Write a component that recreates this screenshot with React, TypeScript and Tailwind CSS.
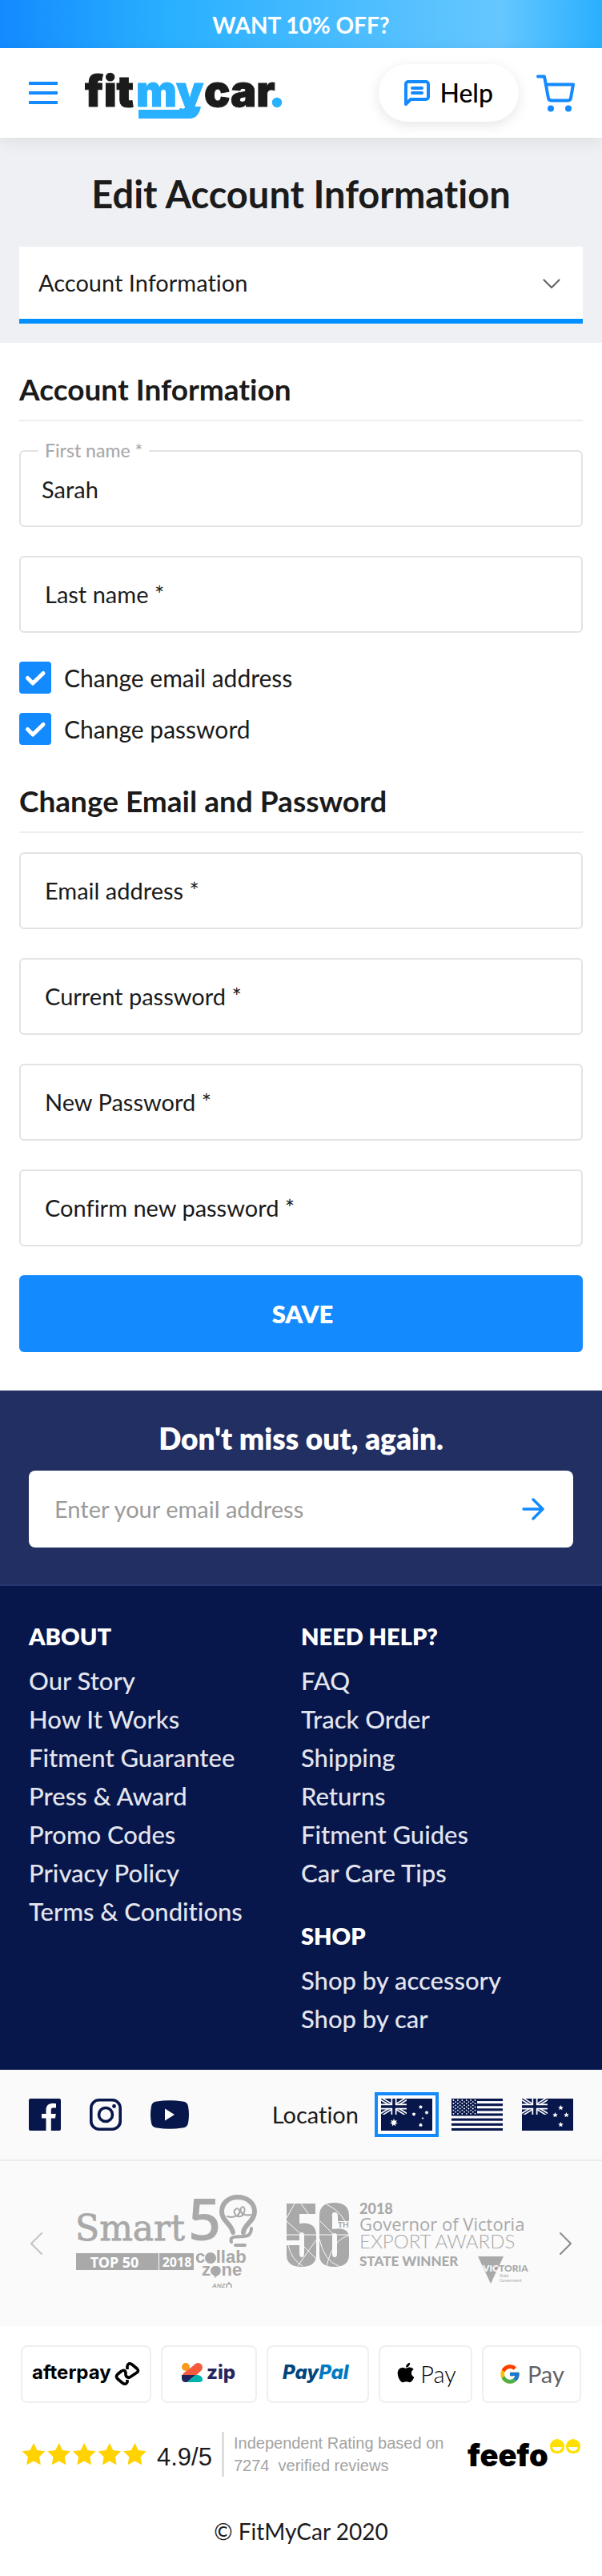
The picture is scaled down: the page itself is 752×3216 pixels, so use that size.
import { useState } from "react";
import type { ReactNode } from "react";
import { FaApple } from "react-icons/fa";
import { FcGoogle } from "react-icons/fc";

const LATO = "Lato, sans-serif";
const INTER = "Inter, sans-serif";
const SANS = '"Liberation Sans", sans-serif';

function MenuIcon() {
  return (
    <svg viewBox="0 0 36 28" className="h-7 w-9" fill="#148aff" aria-hidden="true">
      <path d="M0 0h36v4H0zM0 12h36v4H0zM0 24h36v4H0z" />
    </svg>
  );
}

function Logo() {
  return (
    <svg viewBox="0 0 248 64" className="h-16 w-62 overflow-visible" role="img" aria-label="fitmycar">
      <g fontFamily={INTER} fontWeight="900" fontSize="54" fill="#1b1b1b" stroke="#1b1b1b" strokeWidth="1">
        <text x="2" y="49">fit</text>
        <text x="66" y="49" fill="#29b0ff" stroke="#29b0ff">my</text>
        <text x="151" y="49">car</text>
      </g>
      <path d="M69 53h61q4 0 4-4h13q-3 15-14 15H69z" fill="#29b0ff" />
      <circle cx="242" cy="44" r="6.2" fill="#29b0ff" />
    </svg>
  );
}

function ChatIcon() {
  return (
    <svg viewBox="0 0 32 32" className="size-8" fill="none" stroke="#148aff" strokeWidth="4" strokeLinecap="round" strokeLinejoin="round" aria-hidden="true">
      <path d="M2 30V5a3 3 0 0 1 3-3h22a3 3 0 0 1 3 3v16a3 3 0 0 1-3 3H8z" />
      <path d="M10 10h12M10 16h12" />
    </svg>
  );
}

function CartIcon() {
  return (
    <svg viewBox="0 0 48 47" className="h-12 w-12" fill="none" stroke="#148aff" strokeWidth="4" strokeLinecap="round" strokeLinejoin="round" aria-hidden="true">
      <path d="M2 3h8l5 27q.7 3 4 3h20q3.500 0 4-3l3-17H13" />
      <circle cx="18" cy="43" r="4" fill="#148aff" stroke="none" />
      <circle cx="40" cy="43" r="4" fill="#148aff" stroke="none" />
    </svg>
  );
}

function Field({ id, label, type = "text", initial = "" }: { id: string; label: string; type?: string; initial?: string }) {
  const [value, setValue] = useState(initial);
  return (
    <div className="relative">
      <input
        id={id}
        type={type}
        value={value}
        onChange={(e) => setValue(e.target.value)}
        className="block h-24 w-full rounded-md border-2 border-[#e3e3e3] bg-transparent px-[26px] text-[29px] text-[#1b1b1b] outline-none"
      />
      <label
        htmlFor={id}
        className={
          value
            ? "pointer-events-none absolute -top-3 left-6 bg-white px-2 text-[23px] leading-6 font-medium text-[#a9a9a9]"
            : "pointer-events-none absolute inset-y-0 left-8 flex items-center text-[29px] text-[#1b1b1b]"
        }
      >
        {label} *
      </label>
    </div>
  );
}

function Check({ id, children }: { id: string; children: ReactNode }) {
  return (
    <div className="flex items-center gap-4">
      <span className="grid size-10">
        <input id={id} type="checkbox" defaultChecked className="peer col-start-1 row-start-1 size-10 appearance-none rounded border-2 border-[#148aff] checked:bg-[#148aff]" />
        <svg viewBox="0 0 40 40" className="pointer-events-none invisible col-start-1 row-start-1 size-10 peer-checked:visible" fill="none" stroke="#fff" strokeWidth="5" strokeLinecap="round" strokeLinejoin="round" aria-hidden="true">
          <path d="M10.500 20.500l6.500 6.500L30 14.500" />
        </svg>
      </span>
      <label htmlFor={id} className="text-[30px] leading-10">{children}</label>
    </div>
  );
}

function SectionTitle({ children }: { children: ReactNode }) {
  return <h2 className="border-b-2 border-[#eeeeee] pb-4 text-[37px] leading-[44px] font-bold">{children}</h2>;
}

function LinkList({ title, items }: { title: string; items: string[] }) {
  return (
    <div>
      <h3 className="pb-2 text-[29px] leading-[46px] font-extrabold text-white">{title}</h3>
      <ul>
        {items.map((item) => (
          <li key={item}>
            <a href="#" className="block text-[31px] leading-[48px] font-medium text-[#e3e5ee]">{item}</a>
          </li>
        ))}
      </ul>
    </div>
  );
}

function UnionJack() {
  return (
    <g>
      <path d="M0 0l32 20M32 0L0 20" stroke="#fff" strokeWidth="4.500" />
      <path d="M0 0l32 20M32 0L0 20" stroke="#07164b" strokeWidth="1.300" />
      <path d="M16 0v20M0 10h32" stroke="#fff" strokeWidth="7" />
      <path d="M16 0v20M0 10h32" stroke="#07164b" strokeWidth="3.600" />
    </g>
  );
}

function starPoints(cx: number, cy: number, r: number, n: number, inner: number) {
  return Array.from({ length: n * 2 }, (_, i) => {
    const a = (Math.PI * i) / n - Math.PI / 2;
    const q = i % 2 ? r * inner : r;
    return `${(cx + q * Math.cos(a)).toFixed(2)},${(cy + q * Math.sin(a)).toFixed(2)}`;
  }).join(" ");
}

function FlagAu() {
  return (
    <svg viewBox="0 0 64 40" className="h-10 w-16" role="img" aria-label="Australia">
      <path fill="#07164b" d="M0 0h64v40H0z" />
      <svg width="32" height="20" viewBox="0 0 32 20"><UnionJack /></svg>
      <g fill="#fff">
        <polygon points={starPoints(16, 30, 5, 7, 0.5)} />
        {[[49.5, 10.5], [41, 19.5], [57, 17.5], [49.5, 33]].map(([x, y]) => (
          <polygon key={`${x}-${y}`} points={starPoints(x, y, 2.6, 7, 0.6)} />
        ))}
        <polygon points={starPoints(52, 24.5, 1.6, 5, 0.5)} />
      </g>
    </svg>
  );
}

function FlagUs() {
  const dots: [number, number][] = [];
  for (let r = 0; r < 9; r++) {
    for (let c = 0; c < (r % 2 ? 5 : 6); c++) dots.push([2.5 + c * 5.4 + (r % 2 ? 2.7 : 0), 2 + r * 2.1]);
  }
  return (
    <svg viewBox="0 0 64 40" className="h-10 w-16" role="img" aria-label="United States">
      <path fill="#fff" d="M0 0h64v40H0z" />
      {[0, 1, 2, 3, 4, 5, 6].map((i) => (
        <rect key={i} y={(i * 80) / 13} width="64" height={40 / 13} fill="#07164b" />
      ))}
      <path fill="#07164b" d="M0 0h32v20H0z" />
      {dots.map(([x, y]) => (
        <circle key={`${x}-${y}`} cx={x} cy={y} r="0.9" fill="#fff" />
      ))}
    </svg>
  );
}

function FlagNz() {
  return (
    <svg viewBox="0 0 64 40" className="h-10 w-16" role="img" aria-label="New Zealand">
      <path fill="#07164b" d="M0 0h64v40H0z" />
      <svg width="32" height="20" viewBox="0 0 32 20"><UnionJack /></svg>
      <g fill="#fff">
        {[[48.5, 11.5], [41.5, 20.5], [55.5, 20.5], [48.5, 32.5]].map(([x, y]) => (
          <polygon key={`${x}-${y}`} points={starPoints(x, y, 3.5, 5, 0.45)} />
        ))}
      </g>
    </svg>
  );
}

function FacebookIcon() {
  return (
    <svg viewBox="0 0 40 40" className="size-10" aria-hidden="true">
      <rect width="40" height="40" rx="2" fill="#07164b" />
      <path d="M21.500 40V24.500H16V19h5.500v-4.800C21.500 8.900 24.700 6 29.400 6c2 0 3.900.2 4.600.3v5.200h-3.200c-2.500 0-3 1.200-3 3V19h6l-.8 5.500h-5.200V40z" fill="#fff" />
    </svg>
  );
}

function InstagramIcon() {
  return (
    <svg viewBox="0 0 40 40" className="size-10" fill="none" stroke="#07164b" strokeWidth="3.600" aria-hidden="true">
      <rect x="1.800" y="1.800" width="36.400" height="36.400" rx="10" />
      <circle cx="20" cy="20" r="8.500" />
      <circle cx="30.500" cy="9.500" r="2.400" fill="#07164b" stroke="none" />
    </svg>
  );
}

function YoutubeIcon() {
  return (
    <svg viewBox="0 0 48 36" className="h-9 w-12" aria-hidden="true">
      <path d="M8 1.500Q24-1 40 1.500q6 .5 7 6 2 10.500 0 21-1 5.500-7 6-16 2.500-32 0-6-.5-7-6-2-10.500 0-21 1-5.500 7-6z" fill="#07164b" />
      <path d="M18 10.500v15L30 18z" fill="#fff" />
    </svg>
  );
}

function SmartLogo() {
  return (
    <svg viewBox="0 0 228 120" className="h-30 w-57 overflow-visible" fill="#a9a9a9" role="img" aria-label="Smart 50 Top 50 2018">
      <text x="0" y="56" fontFamily='"DejaVu Serif", serif' fontSize="44" stroke="#a9a9a9" strokeWidth="0.8">Smart</text>
      <text x="141" y="56" fontFamily='"Open Sans", sans-serif' fontWeight="600" fontSize="72">5</text>
      <g fill="none" stroke="#a9a9a9" strokeLinecap="round">
        <path d="M197 46c-2-11-14-14-14-26 0-11 9-18 20-18s21 7 21 18c0 12-13 16-14 26" strokeWidth="6" />
        <path d="M190 26c8 3 17-2 15-8-2-4-8 0-6 4 2 6 9 5 11 1 4-8-1-11-3-7-2 5 3 10 12 8" strokeWidth="2" />
        <path d="M195 58c-4-11 17-4 22-9 2-2 3-5 3-8M200 62h12" strokeWidth="4" />
      </g>
      <path d="M1 72h103v21H1zM105 72h43v21h-43z" />
      <g fontFamily='"Noto Sans", sans-serif' fontWeight="700" fill="#fff">
        <text x="49" y="90" fontSize="18" textAnchor="middle">TOP 50</text>
        <text x="127" y="89" fontSize="16" textAnchor="middle">2018</text>
      </g>
      <g fontFamily={SANS} fontWeight="700">
        <text x="150" y="84" fontSize="22">collab</text>
        <text x="158" y="100" fontSize="22">zone</text>
        <text x="171" y="115" fontSize="8" fontStyle="italic">ANZ</text>
      </g>
      <circle cx="169" cy="78" r="7" />
      <path d="M169 94a6 6 0 1 1 12 0c0 4-4 6-7 9v-3c-3-1-5-3-5-6z" />
      <path d="M189 115v-3l3-3 3 3v3" stroke="#a9a9a9" strokeWidth="1.600" fill="none" />
    </svg>
  );
}

function ExportLogo() {
  return (
    <svg viewBox="0 0 304 104" className="h-26 w-76 overflow-visible" fill="#a9a9a9" role="img" aria-label="2018 Governor of Victoria Export Awards State Winner">
      <path d="M0 2h36v13H16v12q21-3 21 15v24q0 15-18.500 15T0 66V54h16v10q0 5 3 5t3-5V43q0-5-3-5t-3 4v6H0z" />
      <path fillRule="evenodd" d="M41 17Q41 1 59.500 1T78 17v7H64v-7q0-4-4-4t-3 4v17q21-4 21 11v21q0 15-18.500 15T41 66zM57 43v22q0 4 3 4t3-4V43q0-4-3-4t-3 4z" />
      <g fill="none" stroke="#fafafa" strokeWidth="1">
        <path d="M0 24l22 20M10 2L0 20M18 2l20 28M0 41h78M22 56l16 16M38 46L14 80M42 24l18 18M50 80q8-34 28-38M41 46q6 28 24 34M2 54q4 18 18 26M50 3q22 10 28 34" />
      </g>
      <text x="64" y="32" fontFamily={LATO} fontSize="10" fontWeight="900">TH</text>
      <g fontFamily={LATO}>
        <text x="91" y="15" fontSize="18" fontWeight="900">2018</text>
        <text x="91" y="36" fontSize="22" fontFamily='"Open Sans", sans-serif'>Governor of Victoria</text>
        <text x="91" y="58" fontSize="24" fontWeight="300">EXPORT AWARDS</text>
        <text x="91" y="80" fontSize="17" fontWeight="900">STATE WINNER</text>
      </g>
      <path d="M239 68h32l-16 34z" />
      <g fontFamily={LATO}>
        <text x="245" y="87" fontSize="12" fontWeight="900"><tspan fill="#fafafa">VIC</tspan><tspan>TORIA</tspan></text>
        <text x="266" y="94" fontSize="5">State</text>
        <text x="266" y="100" fontSize="5">Government</text>
      </g>
    </svg>
  );
}

function PayCard({ label, grow, children }: { label: string; grow: string; children: ReactNode }) {
  return (
    <div role="img" aria-label={label} className={`flex h-18 items-center justify-center gap-1 rounded-lg border-2 border-[#efefef] ${grow}`}>
      {children}
    </div>
  );
}

export default function App() {
  return (
    <div className="min-h-screen bg-white font-[Lato,sans-serif] text-[#1b1b1b] [font-variant-ligatures:no-common-ligatures]">
      <div className="bg-[linear-gradient(90deg,#148aff_0%,#29b0ff_28%,#66c7ff_83%,#29b0ff_100%)] pt-[11px] pb-[9px] text-center text-[28px] leading-10 font-bold text-white">
        WANT 10% OFF?
      </div>

      <header className="relative flex items-center bg-white py-5 pr-[34px] pl-9 shadow-[0_4px_20px_rgba(0,0,0,0.08)]">
        <button type="button" aria-label="Menu" className="mr-8">
          <MenuIcon />
        </button>
        <a href="#" className="block">
          <Logo />
        </a>
        <button type="button" className="ml-auto flex h-18 items-center gap-3 rounded-full bg-white px-8 text-[32px] font-medium text-black shadow-[0_4px_16px_rgba(0,0,0,0.1)]">
          <ChatIcon />
          Help
        </button>
        <a href="#" aria-label="Cart" className="ml-[22px]">
          <CartIcon />
        </a>
      </header>

      <div className="bg-[#eff0f3] px-6 pt-10 pb-6">
        <h1 className="pb-9 text-center text-[47px] leading-[60px] font-bold">Edit Account Information</h1>
        <div className="relative">
          <select aria-label="Account section" className="block h-24 w-full appearance-none rounded-none border-b-6 border-[#0090ff] bg-white px-6 text-[29px]">
            <option>Account Information</option>
          </select>
          <svg viewBox="0 0 22 13" className="pointer-events-none absolute top-10 right-7 h-[13px] w-[22px]" fill="none" stroke="#666" strokeWidth="2.200" strokeLinecap="round" strokeLinejoin="round" aria-hidden="true">
            <path d="M1.500 1.500l9.500 9.500 9.500-9.500" />
          </svg>
        </div>
      </div>

      <form className="px-6 pt-9 pb-12" onSubmit={(e) => e.preventDefault()}>
        <SectionTitle>Account Information</SectionTitle>
        <div className="flex flex-col gap-9 pt-9">
          <Field id="first" label="First name" initial="Sarah" />
          <Field id="last" label="Last name" />
        </div>
        <div className="flex flex-col gap-6 pt-9 pb-12">
          <Check id="change-email">Change email address</Check>
          <Check id="change-password">Change password</Check>
        </div>
        <SectionTitle>Change Email and Password</SectionTitle>
        <div className="flex flex-col gap-9 pt-6">
          <Field id="email" label="Email address" type="email" />
          <Field id="current" label="Current password" type="password" />
          <Field id="new" label="New Password" type="password" />
          <Field id="confirm" label="Confirm new password" type="password" />
          <button type="submit" className="h-24 rounded-md bg-[#148aff] pl-1 text-[31px] font-extrabold text-white">SAVE</button>
        </div>
      </form>

      <section className="border-b-2 border-[#273670] bg-[#222f62] px-9 pt-9 pb-[46px]">
        <h2 className="pb-4 text-center text-[37px] leading-12 font-extrabold text-white">Don't miss out, again.</h2>
        <form className="flex h-24 items-center rounded-lg bg-white pr-9 pl-8" onSubmit={(e) => e.preventDefault()}>
          <input type="email" aria-label="Email address" placeholder="Enter your email address" className="min-w-0 flex-1 text-[29px] outline-none placeholder:text-[#9a9a9a]" />
          <button type="submit" aria-label="Subscribe">
            <svg viewBox="0 0 28 28" className="size-7" fill="none" stroke="#148aff" strokeWidth="3.400" strokeLinecap="round" strokeLinejoin="round" aria-hidden="true">
              <path d="M2 14h23M14 2l12 12-12 12" />
            </svg>
          </button>
        </form>
      </section>

      <nav className="grid grid-cols-2 bg-[#07164b] px-9 pt-10 pb-10">
        <LinkList title="ABOUT" items={["Our Story", "How It Works", "Fitment Guarantee", "Press & Award", "Promo Codes", "Privacy Policy", "Terms & Conditions"]} />
        <div className="flex flex-col gap-8">
          <LinkList title="NEED HELP?" items={["FAQ", "Track Order", "Shipping", "Returns", "Fitment Guides", "Car Care Tips"]} />
          <LinkList title="SHOP" items={["Shop by accessory", "Shop by car"]} />
        </div>
      </nav>

      <footer>
        <div className="flex items-center gap-9 border-b-2 border-[#ececec] bg-[#fafafa] px-9 py-7">
          <a href="#" aria-label="Facebook"><FacebookIcon /></a>
          <a href="#" aria-label="Instagram"><InstagramIcon /></a>
          <a href="#" aria-label="YouTube"><YoutubeIcon /></a>
          <div className="ml-auto flex items-center gap-5">
            <span className="text-[29px]">Location</span>
            <div className="flex items-center gap-4">
              <a href="#" className="border-4 border-[#148aff] bg-white p-1"><FlagAu /></a>
              <a href="#" className="mr-2"><FlagUs /></a>
              <a href="#"><FlagNz /></a>
            </div>
          </div>
        </div>

        <div className="flex items-center bg-[#fafafa] px-9 py-[43px]">
          <button type="button" aria-label="Previous award" className="mr-10">
            <svg viewBox="0 0 18 30" className="h-[30px] w-[18px]" fill="none" stroke="#c4c4c4" strokeWidth="2" strokeLinecap="round" strokeLinejoin="round">
              <path d="M16 2L3 15l13 13" />
            </svg>
          </button>
          <div className="flex flex-1 items-center justify-between">
            <SmartLogo />
            <ExportLogo />
          </div>
          <button type="button" aria-label="Next award" className="ml-9">
            <svg viewBox="0 0 18 30" className="h-[30px] w-[18px]" fill="none" stroke="#8a8a8a" strokeWidth="2" strokeLinecap="round" strokeLinejoin="round">
              <path d="M2 2l13 13L2 28" />
            </svg>
          </button>
        </div>

        <div className="flex gap-3 px-[26px] pt-6">
          <PayCard label="Afterpay" grow="flex-[164]">
            <svg viewBox="0 0 134 34" className="h-[34px] w-[134px] overflow-visible" aria-hidden="true">
              <text x="0" y="23" fontFamily={INTER} fontWeight="700" fontSize="24" fill="#000">afterpay</text>
              <path d="M112 13l-5 4q-3 3 0 6l6 5q4 3 6-1v-3M119 11V7q1-5 6-2l6 5q3 3 0 5l-9 6q-4 1-5-3v-3q-1-4-5-2" fill="none" stroke="#000" strokeWidth="3.600" strokeLinejoin="round" />
            </svg>
          </PayCard>
          <PayCard label="Zip" grow="flex-[120]">
            <svg viewBox="0 0 68 34" className="h-[34px] w-[68px] overflow-visible" aria-hidden="true">
              <circle cx="5" cy="8" r="5" fill="#f89a1c" />
              <path d="M15 6q2-3 6-3 5 1 5 6 0 2-2 4l-9 8H1q-1-3 1-5z" fill="#f25c3d" />
              <path d="M0 18h17L7 27H5q-5 0-5-5z" fill="#21235b" />
              <path d="M17 18h3q6 1 6 6 0 3-4 3H7z" fill="#00b2ae" />
              <text x="31" y="23" fontFamily={INTER} fontWeight="800" fontSize="24" fill="#26265e">zip</text>
            </svg>
          </PayCard>
          <PayCard label="PayPal" grow="flex-[128]">
            <svg viewBox="0 0 88 34" className="h-[34px] w-[88px] overflow-visible" aria-hidden="true">
              <text x="0" y="23" fontFamily={INTER} fontWeight="800" fontStyle="italic" fontSize="24"><tspan fill="#00457c">Pay</tspan><tspan fill="#0079c1">Pal</tspan></text>
            </svg>
          </PayCard>
          <PayCard label="Apple Pay" grow="flex-[116]">
            <FaApple className="-mt-1 size-7 text-black" aria-hidden="true" />
            <span className="text-[29px] font-light text-black">Pay</span>
          </PayCard>
          <PayCard label="Google Pay" grow="flex-[124]">
            <FcGoogle className="size-7" aria-hidden="true" />
            <span className="pl-1 text-[29px] text-[#5f6368]">Pay</span>
          </PayCard>
        </div>

        <div className="flex items-center px-[26px] pt-9">
          <svg viewBox="0 0 158 28" className="h-7 w-[158px]" fill="#ffd200" aria-label="5 stars" role="img">
            {[0, 1, 2, 3, 4].map((i) => (
              <polygon key={i} points={starPoints(16 + i * 31.6, 15, 15, 5, 0.5)} />
            ))}
          </svg>
          <span className="pt-2 pl-3 font-['Liberation_Sans',sans-serif] text-[31px]">4.9/5</span>
          <p className="ml-3 border-l-3 border-[#dddddd] pl-3 font-['Liberation_Sans',sans-serif] text-[20px] leading-7 whitespace-pre text-[#a3a3a3]">
            {"Independent Rating based on\n7274  verified reviews"}
          </p>
          <svg viewBox="0 0 142 40" className="ml-auto h-10 w-[142px] overflow-visible" role="img" aria-label="feefo">
            <text x="0" y="35" fontFamily={INTER} fontWeight="900" fontSize="38" fill="#000">feefo</text>
            <g fill="#ffe000">
              <path fillRule="evenodd" d="M103 10a9 9 0 0 1 18 0q0 9-9 9t-9-9zm3 1q1 5 6 5t6-5z" />
              <path fillRule="evenodd" d="M123 10a9 9 0 0 1 18 0q0 9-9 9t-9-9zm3 1q1 5 6 5t6-5z" />
            </g>
          </svg>
        </div>

        <p className="pt-12 pb-8 text-center text-[28px] leading-10">© FitMyCar 2020</p>
      </footer>
    </div>
  );
}
